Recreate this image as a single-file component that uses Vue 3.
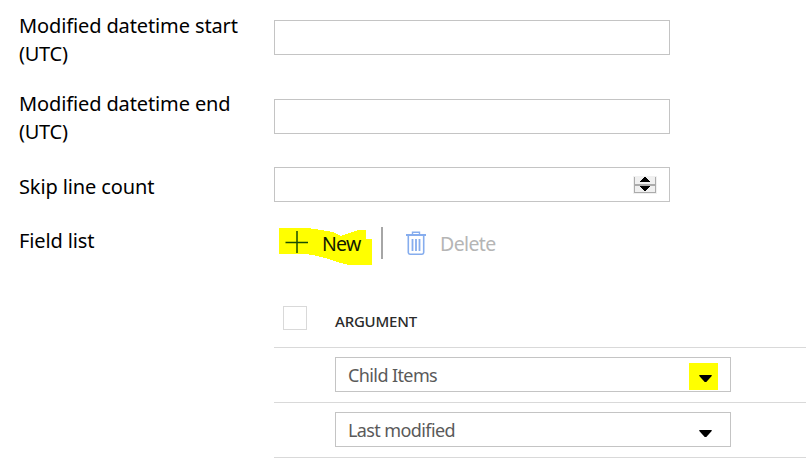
<script setup>
const rows = [
  { id: 'child', label: 'Child Items', marked: true },
  { id: 'modified', label: 'Last modified', marked: false },
]
</script>

<template>
  <main class="panel">
    <div class="field tall first">
      <label class="label">Modified datetime start<br /><span class="utc">(UTC)</span></label>
      <div class="input"></div>
    </div>
    <div class="field tall">
      <label class="label">Modified datetime end<br /><span class="utc">(UTC)</span></label>
      <div class="input"></div>
    </div>
    <div class="field skip">
      <label class="label">Skip line count</label>
      <div class="input number">
        <svg class="spinner" width="24" height="18" viewBox="0 0 24 18" shape-rendering="crispEdges">
          <rect width="24" height="18" fill="#f0f0f0" />
          <path d="M1 1h1v15h20V1h1v16H1z" fill="#ababab" />
          <rect x="1" y="8" width="22" height="2" fill="#ababab" />
          <path d="M11 1h2v1h1v1h1v1h1v1h1v1H7V5h1V4h1V3h1V2h1z" fill="#000" />
          <path d="M7 10h10v1h-1v1h-1v1h-1v1h-1v1h-2v-1h-1v-1H9v-1H8v-1H7z" fill="#000" />
        </svg>
      </div>
    </div>
    <div class="field list">
      <label class="label">Field list</label>
      <div class="toolbar">
        <button class="tool new">
          <svg class="marker" width="94" height="38" viewBox="0 0 94 38" shape-rendering="crispEdges">
            <path d="M0 0H28L42 2L54 4L62 8L70 5L80 2H87V11H93V37H70L58 34L46 30L34 27L26 26H0Z" fill="#ff0" />
          </svg>
          <svg class="plus" width="23" height="23" viewBox="0 0 23 23">
            <path d="M12 0v22M0.5 11.5h23" stroke="#174c00" stroke-width="1.5" fill="none" />
          </svg>
          <span class="new-text">New</span>
        </button>
        <i class="divider"></i>
        <button class="tool delete">
          <svg class="trash" width="20" height="25" viewBox="0 0 20 25" fill="none" stroke="#86adee">
            <path d="M0 4h20" stroke-width="2" />
            <path d="M6.5 4V1.2h7V4" stroke-width="1.4" />
            <path d="M2.3 5v16.6q0 1.6 1.6 1.6h12.2q1.6 0 1.6-1.6V5" stroke-width="1.6" />
            <path d="M6.5 8v12M10 8v12M13.5 8v12" stroke-width="1.8" />
          </svg>
          <span class="delete-text">Delete</span>
        </button>
      </div>
    </div>
    <section class="table">
      <header class="row head">
        <span class="check"></span>
        <span class="argument">ARGUMENT</span>
      </header>
      <div v-for="row in rows" :key="row.id" class="row">
        <div class="select">
          <span class="value">{{ row.label }}</span>
          <span :class="['arrow', { marked: row.marked }]">
            <svg width="13" height="7" viewBox="0 0 13 7"><path d="M0.3 0h12.4v1L7.3 7H5.7L0.3 1z" fill="#000" /></svg>
          </span>
        </div>
      </div>
    </section>
  </main>
</template>

<style>
body {
  margin: 0;
  background: #fff;
}
</style>

<style scoped>
.panel {
  box-sizing: border-box;
  width: 806px;
  height: 467px;
  overflow: hidden;
  padding-top: 12px;
  font-family: "Segoe UI", "Noto Sans", sans-serif;
  font-size: 20px;
  line-height: 28px;
  color: #000;
}
.field {
  display: grid;
  grid-template-columns: 255px 396px;
  padding-left: 19px;
  white-space: nowrap;
}
.tall {
  height: 78px;
}
.tall .input {
  margin-top: 9px;
}
.tall.first .input {
  margin-top: 8px;
}
.label {
  letter-spacing: -0.12px;
}
.utc {
  letter-spacing: -0.25px;
}
.input {
  box-sizing: border-box;
  height: 35px;
  border: 1px solid #c4c4c4;
}
.skip {
  height: 59px;
  box-sizing: border-box;
}
.skip .label {
  padding-top: 5px;
}
.skip .input {
  margin-top: -1px;
}
.number {
  display: flex;
  justify-content: flex-end;
  padding: 8px 12px 0 0;
}
.spinner {
  display: block;
}
.list {
  height: 77px;
}
.toolbar {
  display: flex;
  height: 32px;
}
.tool {
  position: relative;
  display: flex;
  padding: 0;
  border: 0;
  background: none;
  font: inherit;
  line-height: 28px;
}
.new {
  width: 107px;
  padding-left: 11px;
}
.marker {
  position: absolute;
  left: 5px;
  top: 1px;
}
.plus {
  position: relative;
  margin-top: 4px;
}
.new-text {
  position: relative;
  margin: 3px 0 0 14px;
  color: #111800;
  font-size: 19.5px;
  letter-spacing: -0.7px;
}
.divider {
  width: 2px;
  height: 32px;
  background: #a6a6a6;
}
.delete {
  padding-left: 23px;
  color: #b5b5b5;
}
.trash {
  margin-top: 4px;
}
.delete-text {
  margin: 3px 0 0 14px;
  font-size: 19.5px;
  letter-spacing: -0.6px;
}
.table {
  margin-left: 274px;
}
.row {
  box-sizing: border-box;
  height: 55px;
  padding: 9px 0 0 61px;
  border-bottom: 1px solid #d9d9d9;
}
.head {
  display: flex;
  height: 44px;
  padding: 2px 0 0 9px;
}
.check {
  box-sizing: border-box;
  width: 24px;
  height: 24px;
  border: 1px solid #d9d9d9;
}
.argument {
  margin: 1px 0 0 28px;
  font-size: 15px;
  font-weight: 500;
  letter-spacing: -0.2px;
  color: #2b2b2b;
}
.select {
  box-sizing: border-box;
  display: flex;
  justify-content: space-between;
  width: 396px;
  height: 35px;
  padding: 5px 12px 0;
  border: 1px solid #c4c4c4;
  color: #5a5a5a;
  font-size: 18px;
}
.value {
  line-height: 24px;
  letter-spacing: -0.6px;
}
.arrow {
  box-sizing: border-box;
  width: 29px;
  height: 27px;
  padding: 12px 0 0 10px;
  line-height: 0;
}
.marked {
  background: #ff0;
}
</style>
